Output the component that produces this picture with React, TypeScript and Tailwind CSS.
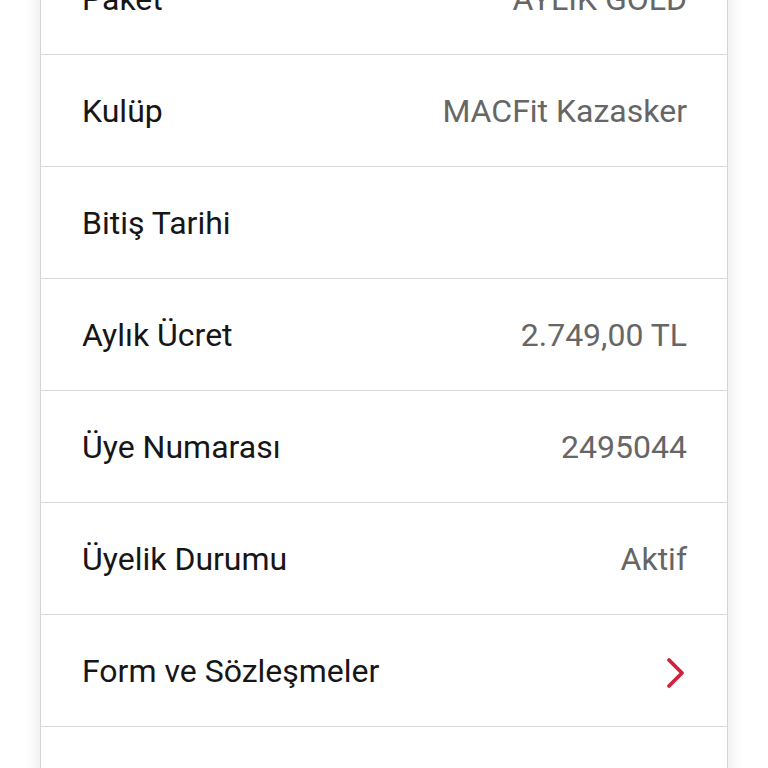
import React from "react";

const rows: { label: string; value?: string; chevron?: boolean }[] = [
  { label: "Paket", value: "AYLIK GOLD" },
  { label: "Kulüp", value: "MACFit Kazasker" },
  { label: "Bitiş Tarihi", value: "" },
  { label: "Aylık Ücret", value: "2.749,00 TL" },
  { label: "Üye Numarası", value: "2495044" },
  { label: "Üyelik Durumu", value: "Aktif" },
  { label: "Form ve Sözleşmeler", chevron: true },
  { label: "", value: "" },
];

export default function App() {
  return (
    <div
      className="w-[768px] h-[768px] overflow-hidden bg-white"
      style={{ fontFamily: "Roboto, 'Noto Sans', sans-serif" }}
    >
      <div className="mx-[40px] mt-[-57px] bg-white border-x border-[#d4d4d4] shadow-[0_0_18px_rgba(0,0,0,0.10)]">
        {rows.map((r, i) => (
          <div
            key={i}
            className="h-[112px] flex items-center justify-between pl-[41px] pr-[40px] border-b border-[#d9d9d9]"
          >
            <span className="text-[32px] text-[#161616] leading-none">{r.label}</span>
            {r.chevron ? (
              <svg width="24" height="36" viewBox="0 0 24 36" className="mr-[-1px] mt-[4px]">
                <path
                  d="M5 5 L18 18 L5 31"
                  fill="none"
                  stroke="#d2213a"
                  strokeWidth="3.8"
                  strokeLinecap="round"
                  strokeLinejoin="round"
                />
              </svg>
            ) : (
              <span className="text-[32px] text-[#666666] leading-none">{r.value}</span>
            )}
          </div>
        ))}
      </div>
    </div>
  );
}
